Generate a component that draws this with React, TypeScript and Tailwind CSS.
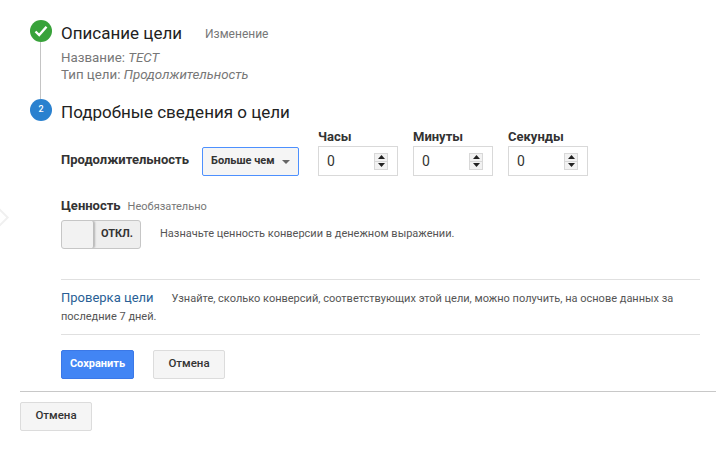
import React from "react";

function Spin() {
  return (
    <div className="flex h-[17px] w-[14px] flex-col items-center justify-between bg-[#d8d8d8] p-[1px]">
      <div className="flex h-[7px] w-[12px] items-center justify-center bg-[#f2f2f2]">
        <svg width="7" height="4" viewBox="0 0 7 4"><path d="M3.5 0L7 4H0z" fill="#222" /></svg>
      </div>
      <div className="flex h-[7px] w-[12px] items-center justify-center bg-[#f2f2f2]">
        <svg width="7" height="4" viewBox="0 0 7 4"><path d="M0 0h7L3.5 4z" fill="#222" /></svg>
      </div>
    </div>
  );
}

function TimeField({ label }: { label: string }) {
  return (
    <div className="flex w-[80px] flex-col">
      <div className="h-[16px] text-[13px] leading-[16px] font-bold text-[#333]">{label}</div>
      <div className="mt-[1px] flex h-[30px] items-center justify-between border border-[#d9d9d9] pr-[9px] pl-[8px] text-[14px] text-[#333]">
        <span>0</span>
        <Spin />
      </div>
    </div>
  );
}

export default function App() {
  return (
    <div className="relative h-[465px] w-[716px] overflow-hidden bg-white font-['Roboto',sans-serif] text-[#333]">
      <div className="absolute top-[210px] left-[-9px] h-[15px] w-[15px] rotate-45 border-2 border-[#f0f0f0] bg-white" />
      <div className="flex pt-[20px] pl-[30px]">
        <div className="flex w-[31px] flex-col items-start">
          <div className="flex h-[22px] w-[22px] items-center justify-center rounded-full bg-[#38a23a]">
            <svg width="14" height="12" viewBox="0 0 14 12"><path d="M1.5 6.5L5.2 10 12.5 1.8" fill="none" stroke="#fff" strokeWidth="2.4" /></svg>
          </div>
          <div className="ml-[10px] h-[57px] w-[1px] bg-[#c4c4c4]" />
          <div className="flex h-[22px] w-[22px] items-center justify-center rounded-full bg-[#2a81cf] text-[9px] font-medium text-white">2</div>
        </div>
        <div className="flex w-[639px] flex-col">
          <div className="flex h-[26px] items-center pt-[1px]">
            <span className="text-[17px] text-[#222]">Описание цели</span>
            <span className="ml-[23px] pt-[1px] text-[12px] text-[#777]">Изменение</span>
          </div>
          <div className="mt-[3px] text-[13.3px] leading-[17px] text-[#777]">
            <div>Название: <i>ТЕСТ</i></div>
            <div>Тип цели: <i>Продолжительность</i></div>
          </div>
          <div className="mt-[17px] flex h-[26px] items-center text-[17px] text-[#222]">Подробные сведения о цели</div>
          <div className="mt-[3px] flex h-[47px] items-end">
            <div className="w-[141px] pb-[8px] text-[13px] leading-[16px] font-bold">Продолжительность</div>
            <div className="flex h-[29px] w-[97px] items-center rounded-[2px] border border-[#4d90fe] bg-[#f5f5f5] pl-[8px] text-[11px] font-bold">
              <span>Больше чем</span>
              <span className="ml-[7px] h-0 w-0 border-x-[4px] border-t-[4px] border-x-transparent border-t-[#666]" />
            </div>
            <div className="ml-[19px] flex gap-[15px]">
              <TimeField label="Часы" />
              <TimeField label="Минуты" />
              <TimeField label="Секунды" />
            </div>
          </div>
          <div className="mt-[20px] flex items-baseline">
            <span className="text-[13px] font-bold">Ценность</span>
            <span className="ml-[7px] text-[11px] text-[#777]">Необязательно</span>
          </div>
          <div className="mt-[4px] flex items-center">
            <div className="flex h-[29px] w-[80px] overflow-hidden rounded-[3px] border border-[#c6c6c6] bg-[#eeeeee]">
              <div className="h-full w-[32px] rounded-[2px] border-r border-[#bdbdbd] bg-[#f2f2f2] shadow-[1px_0_2px_rgba(0,0,0,0.25)]" />
              <div className="flex flex-1 items-center justify-center text-[11px] font-bold">ОТКЛ.</div>
            </div>
            <span className="ml-[19px] pt-[1px] text-[11px] text-[#555]">Назначьте ценность конверсии в денежном выражении.</span>
          </div>
          <div className="mt-[30px] border-y border-[#e0e0e0] pt-[9px] pb-[8px]">
            <div className="text-[11px] leading-[18px] text-[#555]">
              <span className="mr-[18px] text-[13px] leading-[18px] text-[#2a5f96]">Проверка цели</span>
              Узнайте, сколько конверсий, соответствующих этой цели, можно получить, на основе данных за последние 7 дней.
            </div>
          </div>
          <div className="mt-[15px] flex gap-[19px]">
            <button className="h-[29px] w-[73px] rounded-[2px] border border-[#3b78e7] bg-[#4285f4] text-[11px] font-bold text-white">Сохранить</button>
            <button className="h-[29px] w-[72px] rounded-[2px] border border-[#dcdcdc] bg-[#f5f5f5] text-[11.5px] font-medium text-[#333]">Отмена</button>
          </div>
        </div>
      </div>
      <div className="mt-[12px] ml-[20px] border-t border-[#c8c8c8] pt-[10px]">
        <button className="h-[29px] w-[72px] rounded-[2px] border border-[#dcdcdc] bg-[#f5f5f5] text-[11.5px] font-medium text-[#333]">Отмена</button>
      </div>
    </div>
  );
}
